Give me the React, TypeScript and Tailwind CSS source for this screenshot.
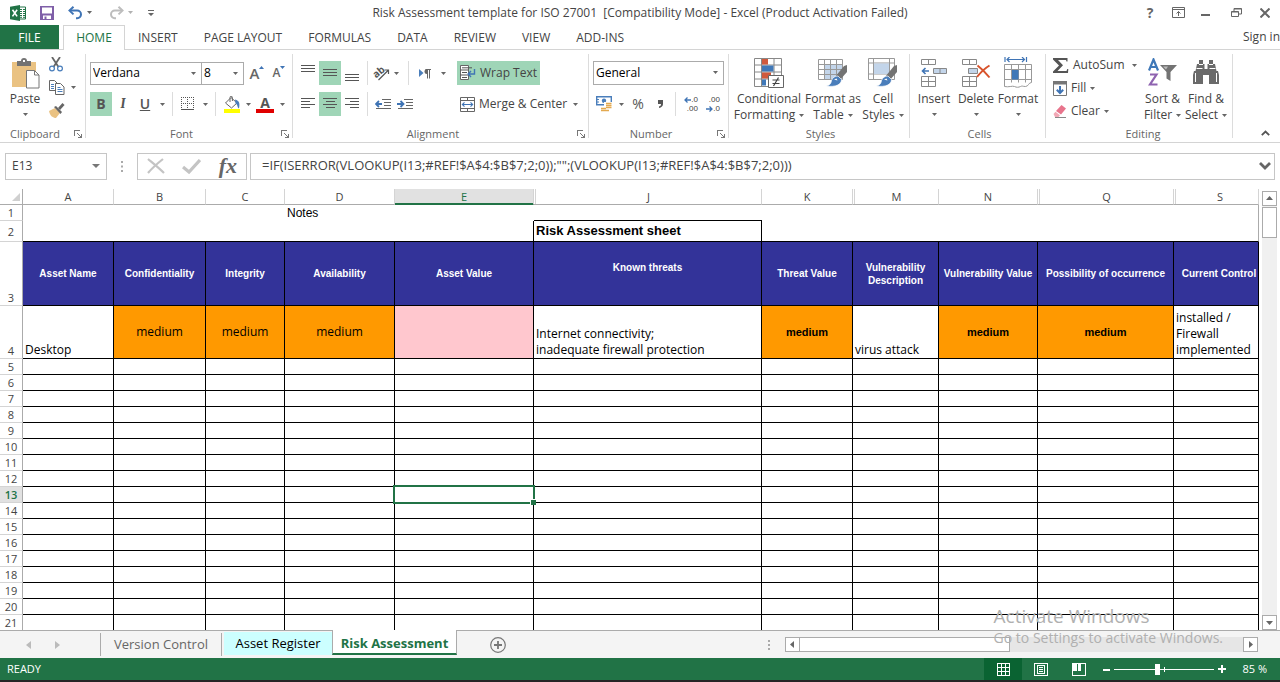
import type { ReactNode } from 'react';

/* ---------- small shared pieces ---------- */

function Caret({ className = '' }: { className?: string }) {
  return (
    <svg width="5" height="3" viewBox="0 0 5 3" className={`shrink-0 ${className}`} aria-hidden="true">
      <path d="M0 0h5L2.500 3z" fill="#666" />
    </svg>
  );
}

function DropButton({ label, className = '' }: { label: string; className?: string }) {
  return (
    <button aria-label={label} className={`flex h-6 w-3 shrink-0 items-center justify-center ${className}`}>
      <Caret />
    </button>
  );
}

function Divider() {
  return <div className="w-px shrink-0 self-stretch bg-[#dcdcdc]" />;
}

function IconButton({ label, active, className = 'w-[22px]', children }: {
  label: string;
  active?: boolean;
  className?: string;
  children: ReactNode;
}) {
  return (
    <button
      aria-label={label}
      className={`flex h-6 shrink-0 items-center justify-center ${className} ${active ? 'bg-[#9fd5b7]' : ''}`}
    >
      {children}
    </button>
  );
}

function BigButton({ icon, lines, caretBelow, className }: {
  icon: ReactNode;
  lines: string[];
  caretBelow?: boolean;
  className: string;
}) {
  return (
    <button className={`flex shrink-0 flex-col items-center pt-[7px] leading-4 whitespace-nowrap ${className}`}>
      <span className="mb-0.5 flex h-8 items-center justify-center">{icon}</span>
      {lines.map((line, i) => (
        <span key={line} className="flex items-center gap-1">
          {line}
          {!caretBelow && i === lines.length - 1 && <Caret />}
        </span>
      ))}
      {caretBelow && <Caret className="mt-1.5" />}
    </button>
  );
}

function Group({ title, launcher, className, children }: {
  title: string;
  launcher?: boolean;
  className: string;
  children: ReactNode;
}) {
  return (
    <section aria-label={title} className={`relative flex shrink-0 flex-col ${className}`}>
      <div className="flex h-[76px]">{children}</div>
      <div className="flex h-4 items-center justify-center text-[11px] text-[#666]">{title}</div>
      {launcher && (
        <button aria-label={`${title} settings`} className="absolute right-1 bottom-1">
          <svg width="8" height="8" viewBox="0 0 8 8" fill="none" stroke="#777" shapeRendering="crispEdges">
            <path d="M.5 6V.5H6M3 3l4 4M7.500 3.500v4h-4" />
          </svg>
        </button>
      )}
      <div className="absolute top-1 right-0 bottom-1 w-px bg-[#dcdcdc]" />
    </section>
  );
}

/* ---------- icons ---------- */

const ExcelIcon = () => (
  <svg width="16" height="16" viewBox="0 0 16 16">
    <path d="M9 2h6.500v12H9z" fill="#fff" stroke="#217346" />
    <path d="M10 4.500h2M13 4.500h2M10 6.500h2M13 6.500h2M10 8.500h2M13 8.500h2M10 10.500h2M13 10.500h2M10 12.300h2M13 12.300h2" stroke="#217346" />
    <path d="M0 1.800L10 0v16L0 14.200z" fill="#217346" />
    <path d="M2.500 4.800l4.600 6.600M7.100 4.800l-4.600 6.600" stroke="#fff" strokeWidth="1.600" />
  </svg>
);

const SaveIcon = () => (
  <svg width="14" height="14" viewBox="0 0 14 14">
    <path d="M0 0h14v14H0z" fill="#7f5fa8" />
    <path d="M2 1.500h10v6H2z" fill="#fff" />
    <path d="M3 9.500h8V13H3z" fill="#fff" />
    <path d="M4.500 10.500h2V13h-2z" fill="#7f5fa8" />
  </svg>
);

const UndoIcon = ({ color, flip }: { color: string; flip?: boolean }) => (
  <svg width="15" height="14" viewBox="0 0 15 14" fill="none" stroke={color} strokeWidth="2" className={flip ? '-scale-x-100' : ''}>
    <path d="M5.500 0.800L1.500 4.600l4 3.800" />
    <path d="M2 4.600h7.200a3.800 3.800 0 0 1 0 7.600H8" />
  </svg>
);

const PasteIcon = () => (
  <svg width="29" height="31" viewBox="0 0 29 31">
    <path d="M1 4h24v25H1z" fill="#eac282" />
    <path d="M6 3h4a3 3 0 0 1 6 0h4v5H6z" fill="#737373" />
    <path d="M12 2h2v2h-2z" fill="#fff" />
    <path d="M15.500 12.500h8l4.500 4.500v13H15.500z" fill="#fff" stroke="#777" />
    <path d="M23.500 12.500V17H28" fill="none" stroke="#777" />
  </svg>
);

const CutIcon = () => (
  <svg width="14" height="15" viewBox="0 0 14 15" fill="none">
    <path d="M3 0l6.500 10M11 0L4.500 10" stroke="#666" strokeWidth="1.800" />
    <circle cx="3" cy="11.500" r="2.400" stroke="#4a7ebb" strokeWidth="1.200" />
    <circle cx="11" cy="11.500" r="2.400" stroke="#4a7ebb" strokeWidth="1.200" />
  </svg>
);

const CopyIcon = () => (
  <svg width="16" height="15" viewBox="0 0 16 15" fill="#fff" stroke="#666">
    <path d="M.5.5h5l3 3v7h-8z" />
    <path d="M2 4.500h3M2 6.500h3M2 8.500h3" stroke="#4a7ebb" />
    <path d="M6.500 3.500h5l3.500 3.500v7.500H6.500z" />
    <path d="M8.500 7.500h3M8.500 9.500h5M8.500 11.500h5" stroke="#4a7ebb" />
  </svg>
);

const PainterIcon = () => (
  <svg width="16" height="15" viewBox="0 0 16 15">
    <path d="M0 8l6-3 5 5-4 5c-3 0-6-2-7-7z" fill="#eac282" />
    <path d="M5 4l2-1 6 6-1.500 2z" fill="#666" />
    <path d="M10 6l4.500-5" stroke="#666" strokeWidth="2.800" />
  </svg>
);

const BordersIcon = () => (
  <svg width="14" height="14" viewBox="0 0 14 14" fill="none" stroke="#555" shapeRendering="crispEdges">
    <path d="M.5 0v12M6.500 0v12M12.500 0v12M0 .5h13M0 6.500h13" strokeDasharray="1 1" />
    <path d="M0 12.500h13" />
  </svg>
);

const FillColorIcon = () => (
  <svg width="16" height="17" viewBox="0 0 16 17">
    <path d="M7 1.500l6 5.500-5.500 5-6-5z" fill="#fff" stroke="#666" />
    <path d="M6 6V1.500a1.200 1.200 0 0 1 2.400 0V5" fill="none" stroke="#666" />
    <path d="M11 3.500c4.500 1 5 4 4 9-2-1-1-4-3.500-5z" fill="#4a7ebb" />
    <path d="M0 13h16v4H0z" fill="#ffff00" />
  </svg>
);

type AlignMode = 'top' | 'middle' | 'bottom' | 'left' | 'center' | 'right';
const alignPaths: Record<AlignMode, string> = {
  top: 'M0 .5h14M0 3.500h14M0 6.500h14',
  middle: 'M0 4.500h14M0 7.500h14M0 10.500h14',
  bottom: 'M0 9.500h14M0 12.500h14M0 15.500h14',
  left: 'M0 2.500h14M0 5.500h9M0 8.500h14M0 11.500h9',
  center: 'M0 2.500h14M2.500 5.500h9M0 8.500h14M2.500 11.500h9',
  right: 'M0 2.500h14M5 5.500h9M0 8.500h14M5 11.500h9',
};
const AlignIcon = ({ mode }: { mode: AlignMode }) => (
  <svg width="14" height="16" viewBox="0 0 14 16" stroke="#555" shapeRendering="crispEdges">
    <path d={alignPaths[mode]} />
  </svg>
);

const OrientationIcon = () => (
  <svg width="17" height="16" viewBox="0 0 17 16" className="overflow-visible">
    <text x="0" y="11" fontSize="10" fontWeight="bold" fill="#555" transform="rotate(-40 5 8)">ab</text>
    <path d="M5.500 15L15 5.500M11.500 5h4v4" fill="none" stroke="#555" strokeWidth="1.200" />
  </svg>
);

const RtlIcon = () => (
  <svg width="13" height="11" viewBox="0 0 13 11">
    <path d="M0 1l4.500 4L0 9z" fill="#4a7ebb" />
    <path d="M8 1a2.500 2.500 0 0 0 0 5z" fill="#666" />
    <path d="M6.500 1.500H12M8.500 1v9.500M10.500 1v9.500" stroke="#666" />
  </svg>
);

const IndentIcon = ({ out }: { out?: boolean }) => (
  <svg width="16" height="12" viewBox="0 0 16 12" fill="none">
    <path d="M7 1.500h9M9 4.500h7M9 7.500h7M1 10.500h15" stroke="#666" shapeRendering="crispEdges" />
    <path d={out ? 'M7 6H1.500M4 3L1 6l3 3' : 'M0 6h6M3.500 3l3 3-3 3'} stroke="#3f74b5" strokeWidth="1.800" />
  </svg>
);

const WrapIcon = () => (
  <svg width="16" height="16" viewBox="0 0 16 16" fill="none">
    <path d="M.5.5h8v14h-8z" fill="#fff" stroke="#666" />
    <path d="M.5 5h8M.5 10h8M2 2.800h10M2 7.500h5M2 12.500h5" stroke="#555" />
    <path d="M14.500 4v5H8.500M11 6L8.200 9l2.800 3" stroke="#3f74b5" strokeWidth="1.400" />
  </svg>
);

const MergeIcon = () => (
  <svg width="15" height="15" viewBox="0 0 15 15" fill="none">
    <path d="M.5.5h14v14H.5zM.5 3.500h14M.5 11.500h14M7.500 0v3.500M7.500 11.500V15" stroke="#666" />
    <path d="M2 7.500h11M4.500 5.300L2.300 7.500l2.200 2.200M10.500 5.300l2.200 2.200-2.200 2.200" stroke="#3f74b5" strokeWidth="1.100" />
  </svg>
);

const CurrencyIcon = () => (
  <svg width="17" height="16" viewBox="0 0 17 16">
    <path d="M.7.7h14.600v8H.7z" fill="#fff" stroke="#4a7ebb" strokeWidth="1.400" />
    <circle cx="8" cy="4.700" r="2.200" fill="#4a7ebb" />
    <path d="M1 3.500h2M1 6h2" stroke="#4a7ebb" />
    <path d="M8 6h9v10H4v-4h4z" fill="#fff" />
    <path d="M10 7.500h5.500M10 9.500h5.500M10 11.500h5.500M5 12.500h5M5 14.500h8" stroke="#e3a94f" strokeWidth="1.300" />
  </svg>
);

// The two rows of digits sit in a column, with the arrow beside the shorter one
const DecimalIcon = ({ more }: { more?: boolean }) => {
  const arrow = (
    <svg width="7" height="6" viewBox="0 0 7 6" fill="none" stroke="#3f74b5" strokeWidth="1.300">
      <path d={more ? 'M7 3H1M3.500.5L1 3l2.500 2.500' : 'M0 3h6M3.500.5L6 3 3.500 5.500'} />
    </svg>
  );
  return (
    <span className={`flex flex-col items-end font-["Liberation_Sans",sans-serif] text-[8px] leading-[9px] text-[#444]`}>
      <span className="flex items-center">{more && arrow}{more ? '.0' : '.00'}</span>
      <span className="flex items-center">{!more && arrow}{more ? '.00' : '.0'}</span>
    </span>
  );
};

const ConditionalIcon = () => (
  <svg width="30" height="31" viewBox="0 0 30 31">
    <path d="M.5.5h27v28H.5zM7.500.5v28M20 .5v28M.5 7h27M.5 14h27M.5 21h27" fill="#fff" stroke="#888" />
    <path d="M8 1h6v5.500H8zM8 14.500h9v6H8z" fill="#d05a3d" />
    <path d="M8 7.500h11.500v6H8zM8 21.500h4v6H8z" fill="#3f78b8" />
    <path d="M14.500 17.500h15v12h-15z" fill="#fff" stroke="#666" />
    <path d="M18.500 22h7M18.500 25.500h7M24.500 19.500l-5 8.500" stroke="#444" strokeWidth="1.200" />
  </svg>
);

const Brush = () => (
  <>
    <path d="M29 7v7l-8 9-4-4 9-11z" fill="#737373" />
    <path d="M20 18l3.500 3.500c0 5-6 8-15 6.500 4-1 4.500-3 5-5.500 1-3 3.500-4.500 6.500-4.500z" fill="#4a7ebb" stroke="#fff" strokeWidth=".7" />
    <path d="M16 21.500l2.500-1 1 2z" fill="#fff" />
  </>
);

const FormatTableIcon = () => (
  <svg width="30" height="30" viewBox="0 0 30 30">
    <path d="M.5 1.500h24v20H.5z" fill="#fff" />
    <path d="M7 7h17.500v14.500H7z" fill="#c3d5ea" />
    <path d="M.5 1.500h24v20H.5zM6.500 1.500v20M12.500 1.500v20M18.500 1.500v20M.5 6.500h24M.5 11.500h24M.5 16.500h24" fill="none" stroke="#999" />
    <Brush />
  </svg>
);

const CellStylesIcon = () => (
  <svg width="30" height="30" viewBox="0 0 30 30">
    <path d="M.5.5h26v21H.5zM5.500.5v21M21.500.5v21M.5 5h26M.5 16h26" fill="#fff" stroke="#999" />
    <path d="M6 5.500h15V16H6z" fill="#c3d5ea" />
    <Brush />
  </svg>
);

const InsertIcon = () => (
  <svg width="28" height="28" viewBox="0 0 28 28" fill="none" stroke="#888">
    <path d="M1.500.5h14v5h-14zM8.500.5v5M1.500 17.500h14v10h-14zM8.500 17.500v10M1.500 22.500h14" fill="#fff" />
    <path d="M13.500 9.500h13v5h-13zM20 9.500v5" fill="#c3d5ea" />
    <path d="M9 12H3M5.500 9L2.500 12l3 3" stroke="#3f74b5" strokeWidth="1.600" />
  </svg>
);

const DeleteIcon = () => (
  <svg width="30" height="28" viewBox="0 0 30 28" fill="none" stroke="#888">
    <path d="M1.500.5h14v5h-14zM8.500.5v5M1.500 17.500h14v10h-14zM8.500 17.500v10M1.500 22.500h14" fill="#fff" />
    <path d="M7.500 9.500h9v5h-9z" fill="#c3d5ea" />
    <path d="M16.500 6.500c4 3 8 7 12 12M28.500 6.500c-5 3-9 7-12.500 11.500" stroke="#d8532c" strokeWidth="2" />
  </svg>
);

const FormatIcon = () => (
  <svg width="29" height="32" viewBox="0 0 29 32" fill="none" stroke="#999">
    <path d="M.5 7.500h27v18c-3 0-3 4-6 4s-3-1-5 0-4 1-6 0-6 1-10 0zM7.500 7.500v18M21.500 7.500v18M14.500 7.500v18M.5 12.500h27M.5 22.500h27" fill="#fff" />
    <path d="M8 13h6.500v9.500H8z" fill="#3f78b8" stroke="none" />
    <path d="M1 0v5M22.500 0v5M3 2.500h18M5.500 0L3 2.500 5.500 5M18 0l2.500 2.500L18 5" stroke="#3f74b5" strokeWidth="1.200" />
  </svg>
);

const SigmaIcon = () => (
  <svg width="16" height="15" viewBox="0 0 16 15">
    <path d="M0 0h14.500v3.500h-1L13 2H5l5 5.300L4.500 13H13.500l.8-2h1L15 15H0v-1.500L6 7.500 0 1.500z" fill="#555" />
  </svg>
);

const FillIcon = () => (
  <svg width="14" height="15" viewBox="0 0 14 15" fill="none">
    <path d="M.5.5h13v14H.5z" fill="#fff" stroke="#777" />
    <path d="M0 0h14v3.500H0z" fill="#777" />
    <path d="M7 5v7M3.800 8.800L7 12l3.200-3.200" stroke="#3f74b5" strokeWidth="2" />
  </svg>
);

const EraserIcon = () => (
  <svg width="14" height="13" viewBox="0 0 14 13">
    <path d="M8.500 0L13 3.500 8 9.500 3 6z" fill="#e8748c" />
    <path d="M2.500 6.800l4.500 3.400L5.500 12H2L.5 9z" fill="#f2a7b5" />
    <path d="M2 12.500h11" stroke="#888" />
  </svg>
);

const SortFilterIcon = () => (
  <svg width="30" height="30" viewBox="0 0 30 30">
    <g fill="none" strokeWidth="2.200">
      <path d="M1 12.500L5.500 1.500 10 12.500M2.500 9h6" stroke="#3f78b8" />
      <path d="M2 16.500h6.500L2 26.500h7.500" stroke="#8e63b0" />
    </g>
    <path d="M12 7h17l-6.500 7v9l-4-2.500V14z" fill="#737373" />
    <path d="M15 8.500h5l-2 3z" fill="#bbb" />
  </svg>
);

const FindIcon = () => (
  <svg width="28" height="26" viewBox="0 0 28 26" fill="#6a6a6a">
    <path d="M7 0h4v4h1.500v5h3V4H17V0h4v4h2l1.500 7H26l1 4v9H17v-9h-6v9H1v-9l1-4h1.500L5 4h2z" />
    <path d="M4.500 8.500h6M17.500 8.500h6M3.500 13v9M24.500 13v9M7 4.500h4M17 4.500h4" stroke="#fff" />
  </svg>
);

/* ---------- data ---------- */

const tabs = ['INSERT', 'PAGE LAYOUT', 'FORMULAS', 'DATA', 'REVIEW', 'VIEW', 'ADD-INS'];

const columns = [
  { id: 'A', width: 'w-[91px]', title: 'Asset Name', value: 'Desktop', fill: '' },
  { id: 'B', width: 'w-[92px]', title: 'Confidentiality', value: 'medium', fill: 'orange' },
  { id: 'C', width: 'w-[79px]', title: 'Integrity', value: 'medium', fill: 'orange' },
  { id: 'D', width: 'w-[110px]', title: 'Availability', value: 'medium', fill: 'orange' },
  { id: 'E', width: 'w-[139px]', title: 'Asset Value', value: '', fill: 'pink' },
  { id: 'J', width: 'w-[228px]', title: 'Known threats', value: 'Internet connectivity;\ninadequate firewall protection', fill: '', afterHidden: true },
  { id: 'K', width: 'w-[91px]', title: 'Threat Value', value: 'medium', fill: 'bold' },
  { id: 'M', width: 'w-[86px]', title: 'Vulnerability\nDescription', value: 'virus attack', fill: '', afterHidden: true },
  { id: 'N', width: 'w-[99px]', title: 'Vulnerability Value', value: 'medium', fill: 'bold' },
  { id: 'Q', width: 'w-[136px]', title: 'Possibility of occurrence', value: 'medium', fill: 'bold', afterHidden: true },
  { id: 'S', width: '', title: 'Current Control', value: 'installed /\nFirewall\nimplemented', fill: '', afterHidden: true },
];

const fills: Record<string, string> = {
  '': 'align-bottom',
  orange: 'bg-[#ff9900] text-center align-middle',
  bold: `bg-[#ff9900] text-center align-middle font-["Liberation_Sans",sans-serif] text-[11px] font-bold`,
  pink: 'bg-[#ffc7ce]',
};

const emptyRows = Array.from({ length: 17 }, (_, i) => i + 5);

/* ---------- page parts ---------- */

function TitleBar() {
  return (
    <header className="grid h-[25px] shrink-0 grid-cols-[1fr_auto_1fr] items-center">
      <div className="flex items-center pl-2.5">
        <ExcelIcon />
        <button aria-label="Save" className="ml-3.5"><SaveIcon /></button>
        <button aria-label="Undo" className="ml-3.5"><UndoIcon color="#3f74b5" /></button>
        <DropButton label="Undo history" />
        <button aria-label="Redo" className="ml-3.5"><UndoIcon color="#bdbdbd" flip /></button>
        <DropButton label="Redo history" className="opacity-50" />
        <button aria-label="Customize Quick Access Toolbar" className="ml-3">
          <svg width="6" height="6" viewBox="0 0 6 6"><path d="M0 0h6v1H0zM0 3h6L3 6z" fill="#666" /></svg>
        </button>
      </div>
      <h1 className="whitespace-pre">Risk Assessment template for ISO 27001  [Compatibility Mode] - Excel (Product Activation Failed)</h1>
      <div className="flex items-center justify-end gap-4 pr-2.5">
        <button aria-label="Help" className="w-3 text-sm leading-4 font-bold text-[#666]">?</button>
        <button aria-label="Ribbon Display Options">
          <svg width="13" height="11" viewBox="0 0 13 11" fill="none" stroke="#666">
            <path d="M.5.5h12v10H.5zM.5 2.500h12M6.500 9V4.500M4.500 6.500l2-2 2 2" />
          </svg>
        </button>
        <button aria-label="Minimize">
          <svg width="10" height="10" viewBox="0 0 10 10"><path d="M0 6h9v2H0z" fill="#666" /></svg>
        </button>
        <button aria-label="Restore Down" className="ml-1">
          <svg width="11" height="10" viewBox="0 0 11 10" fill="none" stroke="#666">
            <path d="M.5 3.500h7v5h-7zM3 3.500V.5h7.500V6H8M3 1h7.500M.5 4h7" />
          </svg>
        </button>
        <button aria-label="Close" className="ml-0.5">
          <svg width="10" height="10" viewBox="0 0 10 10" stroke="#666" strokeWidth="2"><path d="M.5.5l9 9M9.500.5l-9 9" /></svg>
        </button>
      </div>
    </header>
  );
}

function RibbonTabs() {
  return (
    <nav className="flex h-[25px] shrink-0 items-stretch border-b border-[#d4d4d4]">
      <button className="w-[59px] bg-[#217346] pt-px text-white">FILE</button>
      <button className="-mb-px ml-1 w-[62px] border border-b-0 border-[#d4d4d4] bg-white text-[#217346]">HOME</button>
      {tabs.map((tab) => (
        <button key={tab} className="px-[13px] pt-0.5">{tab}</button>
      ))}
      <a href="#sign-in" className="ml-auto self-center whitespace-nowrap">Sign in</a>
    </nav>
  );
}

function Ribbon() {
  return (
    <div className="flex h-[93px] shrink-0 overflow-hidden border-b border-[#d4d4d4]">
      <Group title="Clipboard" launcher className="w-[86px] pr-4">
        <BigButton icon={<PasteIcon />} lines={['Paste']} caretBelow className="ml-1 w-[42px]" />
        <div className="flex flex-col items-start gap-2 pt-[7px] pl-[3px]">
          <button aria-label="Cut"><CutIcon /></button>
          <div className="flex items-center">
            <button aria-label="Copy"><CopyIcon /></button>
            <button aria-label="Copy options" className="ml-1.5"><Caret /></button>
          </div>
          <button aria-label="Format Painter"><PainterIcon /></button>
        </div>
      </Group>

      <Group title="Font" launcher className="w-[207px] pr-5 pl-1">
        <div className="flex flex-col gap-[7px] pt-[11px]">
          <div className="flex items-center">
            <div className="relative">
              <select aria-label="Font" className="h-[23px] w-28 appearance-none border border-[#ababab] bg-white pl-0.5 text-black">
                <option>Verdana</option>
              </select>
              <Caret className="absolute top-2.5 right-1.5" />
            </div>
            <div className="relative">
              <select aria-label="Font size" className="-ml-px h-[23px] w-[43px] appearance-none border border-[#ababab] bg-white pl-0.5 text-black">
                <option>8</option>
              </select>
              <Caret className="absolute top-2.5 right-1.5" />
            </div>
            <IconButton label="Increase Font Size" className="ml-0.5 w-[22px]">
              <span className="text-[15px] font-semibold text-[#666]">A</span>
              <svg width="5" height="3" viewBox="0 0 5 3" className="mb-3"><path d="M0 3h5L2.500 0z" fill="#3f74b5" /></svg>
            </IconButton>
            <IconButton label="Decrease Font Size">
              <span className="text-[12px] font-semibold text-[#666]">A</span>
              <svg width="5" height="3" viewBox="0 0 5 3" className="mb-3"><path d="M0 0h5L2.500 3z" fill="#3f74b5" /></svg>
            </IconButton>
          </div>
          <div className="flex items-center text-sm text-[#555]">
            <IconButton label="Bold" active><b>B</b></IconButton>
            <IconButton label="Italic"><i className="font-serif font-bold">I</i></IconButton>
            <IconButton label="Underline"><u className="font-semibold">U</u></IconButton>
            <DropButton label="Underline options" />
            <div className="flex h-6 gap-1">
              <span className="w-0" />
              <Divider />
              <IconButton label="Borders"><BordersIcon /></IconButton>
            </div>
            <DropButton label="Border options" />
            <div className="ml-1 flex h-6">
              <Divider />
            </div>
            <IconButton label="Fill Color" className="ml-0.5 w-7"><FillColorIcon /></IconButton>
            <DropButton label="Fill colors" className="-ml-1" />
            <IconButton label="Font Color">
              <span className="border-b-4 border-[#e00000] px-1 text-sm leading-[13px] font-bold">A</span>
            </IconButton>
            <DropButton label="Font colors" />
          </div>
        </div>
      </Group>

      <Group title="Alignment" launcher className="w-[296px] pr-5 pl-1">
        <div className="flex flex-col gap-[7px] pt-[11px]">
          <div className="flex h-6">
            <IconButton label="Top Align"><AlignIcon mode="top" /></IconButton>
            <IconButton label="Middle Align" active><AlignIcon mode="middle" /></IconButton>
            <IconButton label="Bottom Align" className="mr-1 w-[22px]"><AlignIcon mode="bottom" /></IconButton>
            <Divider />
            <IconButton label="Orientation" className="ml-1 w-[18px]"><OrientationIcon /></IconButton>
            <DropButton label="Orientation options" className="mr-1.5" />
            <Divider />
            <IconButton label="Text direction" className="ml-1 w-6"><RtlIcon /></IconButton>
            <DropButton label="Text direction options" className="mr-1" />
          </div>
          <div className="flex h-6">
            <IconButton label="Align Left"><AlignIcon mode="left" /></IconButton>
            <IconButton label="Center" active><AlignIcon mode="center" /></IconButton>
            <IconButton label="Align Right" className="mr-1 w-[22px]"><AlignIcon mode="right" /></IconButton>
            <Divider />
            <IconButton label="Decrease Indent" className="ml-1 w-[22px]"><IndentIcon out /></IconButton>
            <IconButton label="Increase Indent"><IndentIcon /></IconButton>
          </div>
        </div>
        <div className="mt-2.5 mr-1 h-14 w-px bg-[#dcdcdc]" />
        <div className="flex flex-col items-start gap-[7px] pt-[11px]">
          <button className="flex h-6 items-center gap-1 bg-[#9fd5b7] px-[3px] whitespace-nowrap">
            <WrapIcon />
            Wrap Text
          </button>
          <div className="flex items-center">
            <button className="flex h-6 items-center gap-1 pl-[3px] whitespace-nowrap">
              <MergeIcon />
              Merge &amp; Center
            </button>
            <DropButton label="Merge options" className="ml-0.5" />
          </div>
        </div>
      </Group>

      <Group title="Number" launcher className="w-[140px] pr-5 pl-1">
        <div className="flex flex-col gap-[7px] pt-[11px]">
          <div className="relative">
            <select aria-label="Number Format" className="h-6 w-[131px] appearance-none border border-[#ababab] bg-white pl-0.5 text-black">
              <option>General</option>
            </select>
            <Caret className="absolute top-2.5 right-1.5" />
          </div>
          <div className="flex h-6 text-[#555]">
            <IconButton label="Accounting Number Format"><CurrencyIcon /></IconButton>
            <DropButton label="Accounting formats" />
            <IconButton label="Percent Style"><span className="text-sm">%</span></IconButton>
            <IconButton label="Comma Style" className="mr-1 w-[22px]">
              <svg width="5" height="8" viewBox="0 0 5 8"><path d="M0 0h5v4c0 2-1.500 3.500-4 4V6.500C2.500 6 3 5.500 3 4H0z" fill="#555" /></svg>
            </IconButton>
            <Divider />
            <IconButton label="Increase Decimal" className="ml-1 w-[22px]"><DecimalIcon more /></IconButton>
            <IconButton label="Decrease Decimal"><DecimalIcon /></IconButton>
          </div>
        </div>
      </Group>

      <Group title="Styles" className="w-[181px] pl-0.5">
        <BigButton icon={<ConditionalIcon />} lines={['Conditional', 'Formatting']} className="w-[76px]" />
        <BigButton icon={<FormatTableIcon />} lines={['Format as', 'Table']} className="w-[52px]" />
        <BigButton icon={<CellStylesIcon />} lines={['Cell', 'Styles']} className="w-12" />
      </Group>

      <Group title="Cells" className="w-[136px] pl-[3px]">
        <BigButton icon={<InsertIcon />} lines={['Insert']} caretBelow className="w-[42px]" />
        <BigButton icon={<DeleteIcon />} lines={['Delete']} caretBelow className="w-[42px]" />
        <BigButton icon={<FormatIcon />} lines={['Format']} caretBelow className="w-[42px]" />
      </Group>

      <Group title="Editing" className="w-[187px] pl-[7px]">
        <div className="flex w-[88px] flex-col items-start gap-[7px] pt-[7px] leading-4">
          <div className="flex w-full items-center pr-1">
            <button className="flex items-center gap-1"><SigmaIcon />AutoSum</button>
            <button aria-label="AutoSum options" className="ml-auto"><Caret /></button>
          </div>
          <button className="flex items-center gap-1"><FillIcon />Fill<Caret /></button>
          <button className="flex items-center gap-1"><EraserIcon />Clear<Caret /></button>
        </div>
        <BigButton icon={<SortFilterIcon />} lines={['Sort &', 'Filter']} className="w-[43px]" />
        <BigButton icon={<FindIcon />} lines={['Find &', 'Select']} className="w-11" />
      </Group>

      <button aria-label="Collapse the Ribbon" className="mt-auto mr-2.5 mb-1.5 ml-auto">
        <svg width="9" height="6" viewBox="0 0 9 6" fill="none" stroke="#555" strokeWidth="1.800"><path d="M.8 5.200l3.700-3.700 3.700 3.700" /></svg>
      </button>
    </div>
  );
}

function FormulaBar() {
  return (
    <div className="flex h-[46px] shrink-0 items-center px-[5px]">
      <div className="flex h-[27px] w-[102px] items-center border border-[#c6c6c6]">
        <input aria-label="Name Box" defaultValue="E13" className="w-full min-w-0 pl-1.5 outline-none" />
        <button aria-label="Names" className="px-1.5">
          <svg width="8" height="4" viewBox="0 0 8 4"><path d="M0 0h8L4 4z" fill="#777" /></svg>
        </button>
      </div>
      <svg width="2" height="11" viewBox="0 0 2 11" className="mx-3.5 shrink-0"><path d="M0 0h2v2H0zM0 4.500h2v2H0zM0 9h2v2H0z" fill="#aaa" /></svg>
      <div className="flex h-[27px] w-[110px] shrink-0 items-center justify-between border border-[#c6c6c6] px-[9px]">
        <button aria-label="Cancel">
          <svg width="18" height="16" viewBox="0 0 18 16" fill="none" stroke="#c4c4c4" strokeWidth="2.200"><path d="M1 1c6 5 11 9 16 14M16 1C11 5 6 9 1 15" /></svg>
        </button>
        <button aria-label="Enter">
          <svg width="19" height="15" viewBox="0 0 19 15" fill="none" stroke="#c4c4c4" strokeWidth="3.200"><path d="M1 8l6 5L18 1" /></svg>
        </button>
        <button aria-label="Insert Function" className={`font-["Liberation_Serif",serif] text-[22px] leading-6 font-bold text-[#666] italic`}>fx</button>
      </div>
      <div className="ml-[3px] flex h-[27px] min-w-0 flex-1 items-center border border-[#c6c6c6]">
        <input
          aria-label="Formula Bar"
          defaultValue={'=IF(ISERROR(VLOOKUP(I13;#REF!$A$4:$B$7;2;0));"";(VLOOKUP(I13;#REF!$A$4:$B$7;2;0)))'}
          className="min-w-0 flex-1 pl-[11px] text-[13px] outline-none"
        />
        <button aria-label="Expand Formula Bar" className="px-[3px]">
          <svg width="12" height="8" viewBox="0 0 12 8" fill="none" stroke="#666" strokeWidth="2.800"><path d="M1 1l5 5 5-5" /></svg>
        </button>
      </div>
    </div>
  );
}

function Sheet() {
  const rowHead = 'border-r border-b border-r-[#ababab] border-b-[#d4d4d4] p-0 text-center align-bottom text-[11px] leading-[15px] font-normal text-[#444]';
  return (
    <table className="w-full table-fixed border-separate border-spacing-0 text-black">
      <colgroup>
        <col className="w-[23px]" />
        {columns.map((c) => <col key={c.id} className={c.width} />)}
      </colgroup>
      <thead>
        <tr className="h-4 text-[11px] leading-[15px] text-[#444]">
          <th className="border-r border-b border-[#ababab] p-0">
            <svg width="8" height="8" viewBox="0 0 8 8" className="ml-3"><path d="M8 0v8H0z" fill="#d0d0d0" /></svg>
          </th>
          {columns.map((c) => (
            <th
              key={c.id}
              scope="col"
              className={`border-r border-b border-r-[#d4d4d4] p-0 font-normal ${
                c.id === 'E' ? 'border-b-[#217346] bg-[#e1e1e1] text-[#217346]' : 'border-b-[#ababab]'
              }`}
            >
              <div className={`h-[15px] ${c.id === 'E' ? 'border-b border-[#217346]' : ''} ${c.afterHidden ? 'ml-px border-l border-[#d4d4d4]' : ''} ${c.id === 'S' ? 'pl-1.5' : ''}`}>{c.id}</div>
            </th>
          ))}
        </tr>
      </thead>
      <tbody>
        <tr className="h-4">
          <th scope="row" className={rowHead}>1</th>
          {columns.map((c) => (
            <td
              key={c.id}
              className={`p-0 pl-0.5 font-["Liberation_Sans",sans-serif] leading-[15px] ${c.id === 'J' ? 'border-b border-black' : ''} ${c.id === 'S' ? 'border-r border-[#ababab]' : ''}`}
            >
              {c.id === 'D' && 'Notes'}
            </td>
          ))}
        </tr>
        <tr className="h-[21px]">
          <th scope="row" className={`${rowHead} pb-0.5`}>2</th>
          {columns.map((c) => (
            <td
              key={c.id}
              className={`border-b border-black p-0 pl-0.5 font-["Liberation_Sans",sans-serif] text-[13px] leading-5 font-bold whitespace-nowrap ${
                c.id === 'E' || c.id === 'J' ? 'border-r' : ''
              } ${c.id === 'S' ? 'border-r border-r-[#ababab]' : ''}`}
            >
              {c.id === 'J' && 'Risk Assessment sheet'}
            </td>
          ))}
        </tr>
        <tr className="h-16">
          <th scope="row" className={rowHead}>3</th>
          {columns.map((c) => (
            <td
              key={c.id}
              className={`border-r border-b border-black bg-[#333399] p-0 text-center align-middle font-["Liberation_Sans",sans-serif] text-[10px] leading-[13px] font-bold whitespace-pre text-white ${
                c.id === 'J' ? 'pb-[13px]' : ''
              } ${c.id === 'S' ? 'pl-1.5' : ''}`}
            >
              {c.title}
            </td>
          ))}
        </tr>
        <tr className="h-[53px]">
          <th scope="row" className={rowHead}>4</th>
          {columns.map((c) => (
            <td key={c.id} className={`border-r border-b border-black p-0 px-0.5 leading-4 whitespace-pre ${fills[c.fill]}`}>
              {c.value}
            </td>
          ))}
        </tr>
        {emptyRows.map((row) => (
          <tr key={row} className="h-4">
            <th scope="row" className={`${rowHead} ${row === 13 ? 'bg-[#e1e1e1] font-semibold text-[#217346]' : ''}`}>{row}</th>
            {columns.map((c) => (
              <td key={c.id} className="relative border-r border-b border-black p-0">
                {row === 13 && c.id === 'E' && (
                  <div className="absolute -inset-0.5 z-10 border-2 border-[#217346]">
                    <span className="absolute -right-[3px] -bottom-[3px] size-[6px] border-t border-l border-white bg-[#217346]" />
                  </div>
                )}
              </td>
            ))}
          </tr>
        ))}
      </tbody>
    </table>
  );
}

function ScrollArrow({ label, d, className = '' }: { label: string; d: string; className?: string }) {
  return (
    <button aria-label={label} className={`flex size-[15px] shrink-0 items-center justify-center border border-[#ababab] bg-white ${className}`}>
      <svg width="7" height="7" viewBox="0 0 7 7"><path d={d} fill="#666" /></svg>
    </button>
  );
}

function SheetTabs() {
  return (
    <div className="flex h-7 shrink-0 items-stretch border-t border-[#ababab] bg-[#f4f4f4]">
      <div className="flex w-[100px] items-center pl-[26px]">
        <button aria-label="Previous sheets"><svg width="5" height="8" viewBox="0 0 5 8"><path d="M5 0v8L0 4z" fill="#bbb" /></svg></button>
        <button aria-label="Next sheets" className="ml-6"><svg width="5" height="8" viewBox="0 0 5 8"><path d="M0 0v8l5-4z" fill="#bbb" /></svg></button>
      </div>
      <button className="my-0.5 w-[122px] border-x border-[#ababab] text-[13px] text-[#666]">Version Control</button>
      <button className="mt-px mb-[3px] ml-0.5 w-[108px] bg-[#ccffff] text-[13px] text-black">Asset Register</button>
      <button className="-mt-px mb-[3px] w-[125px] border-x border-b-2 border-x-[#ababab] border-b-[#217346] bg-white pt-1 text-[13px] font-bold text-[#217346]">Risk Assessment</button>
      <button aria-label="New sheet" className="ml-[33px]">
        <svg width="16" height="16" viewBox="0 0 16 16" fill="none" stroke="#777">
          <circle cx="8" cy="8" r="7.300" strokeWidth="1.200" />
          <path d="M8 4v8M4 8h8" strokeWidth="1.800" />
        </svg>
      </button>
      <svg width="2" height="10" viewBox="0 0 2 10" className="mr-[15px] ml-auto self-center"><path d="M0 0h2v2H0zM0 4h2v2H0zM0 8h2v2H0z" fill="#aaa" /></svg>
      <div className="mr-[22px] flex w-[473px] self-center bg-[#e6e6e6]">
        <ScrollArrow label="Scroll left" d="M5 0v7L1 3.500z" />
        <div className="-ml-px w-[211px] border border-[#ababab] bg-white" />
        <ScrollArrow label="Scroll right" d="M2 0v7l4-3.500z" className="ml-auto" />
      </div>
    </div>
  );
}

function StatusBar() {
  return (
    <footer className="flex h-[22px] shrink-0 items-center bg-[#217346] text-[11px] text-white">
      <span className="pl-[7px]">READY</span>
      <div className="ml-auto flex h-full items-center">
        <button aria-label="Normal" className="flex h-full w-[38px] items-center justify-center bg-[#0a6332]">
          <svg width="13" height="13" viewBox="0 0 13 13" fill="none" stroke="#fff" shapeRendering="crispEdges"><path d="M.5.5h12v12H.5zM4.500 0v13M8.500 0v13M0 4.500h13M0 8.500h13" /></svg>
        </button>
        <button aria-label="Page Layout" className="flex h-full w-[38px] items-center justify-center">
          <svg width="14" height="13" viewBox="0 0 14 13" fill="none" stroke="#fff" shapeRendering="crispEdges"><path d="M.5.5h13v12H.5zM3.500 2.500h7v8h-7zM5 4.500h4M5 6.500h4M5 8.500h4" /></svg>
        </button>
        <button aria-label="Page Break Preview" className="flex h-full w-[38px] items-center justify-center">
          <svg width="14" height="13" viewBox="0 0 14 13" fill="none" stroke="#fff" shapeRendering="crispEdges"><path d="M.5.5h13v12H.5z" /><path d="M0 0h5v8H0zM6 0h3v8H6z" fill="#fff" stroke="none" /></svg>
        </button>
        <button aria-label="Zoom Out" className="ml-[5px]">
          <svg width="7" height="7" viewBox="0 0 7 7"><path d="M0 3h7v2H0z" fill="#fff" /></svg>
        </button>
        <div className="relative mx-1 flex items-center">
          <input
            type="range"
            aria-label="Zoom"
            min="0"
            max="200"
            defaultValue="85"
            className="h-3 w-[100px] appearance-none bg-transparent [&::-webkit-slider-runnable-track]:h-px [&::-webkit-slider-runnable-track]:bg-white [&::-webkit-slider-thumb]:-mt-[5px] [&::-webkit-slider-thumb]:h-[11px] [&::-webkit-slider-thumb]:w-[5px] [&::-webkit-slider-thumb]:appearance-none [&::-webkit-slider-thumb]:bg-white"
          />
          <span className="absolute left-1/2 h-[5px] w-px bg-white" />
        </div>
        <button aria-label="Zoom In">
          <svg width="8" height="8" viewBox="0 0 8 8"><path d="M3 0h2v3h3v2H5v3H3V5H0V3h3z" fill="#fff" /></svg>
        </button>
        <span className="mr-[13px] ml-4">85 %</span>
      </div>
    </footer>
  );
}

export default function App() {
  return (
    <div className={`relative flex h-screen flex-col overflow-hidden bg-white font-["Open_Sans",sans-serif] text-[12px] text-[#444]`}>
      <TitleBar />
      <RibbonTabs />
      <Ribbon />
      <FormulaBar />

      <main className="flex min-h-0 flex-1 overflow-hidden">
        <div className="min-w-0 flex-1 overflow-hidden">
          <Sheet />
        </div>
        <div className="mt-0.5 mr-[3px] ml-[3px] flex w-[15px] shrink-0 flex-col bg-[#f0f0f0]">
          <ScrollArrow label="Scroll up" d="M0 5h7L3.500 1z" />
          <div className="mt-px h-[31px] border border-[#ababab] bg-white" />
          <ScrollArrow label="Scroll down" d="M0 2h7L3.500 6z" className="mt-auto" />
        </div>
      </main>

      <SheetTabs />
      <StatusBar />
      <div className="h-0.5 shrink-0 bg-[#252525]" />

      {/* Activation notice floats above the sheet */}
      <div className="pointer-events-none absolute right-[57px] bottom-[34px] z-20 text-[#b0b0b0]">
        <p className="text-[19px] leading-6">Activate Windows</p>
        <p className="text-sm leading-5">Go to Settings to activate Windows.</p>
      </div>
    </div>
  );
}
